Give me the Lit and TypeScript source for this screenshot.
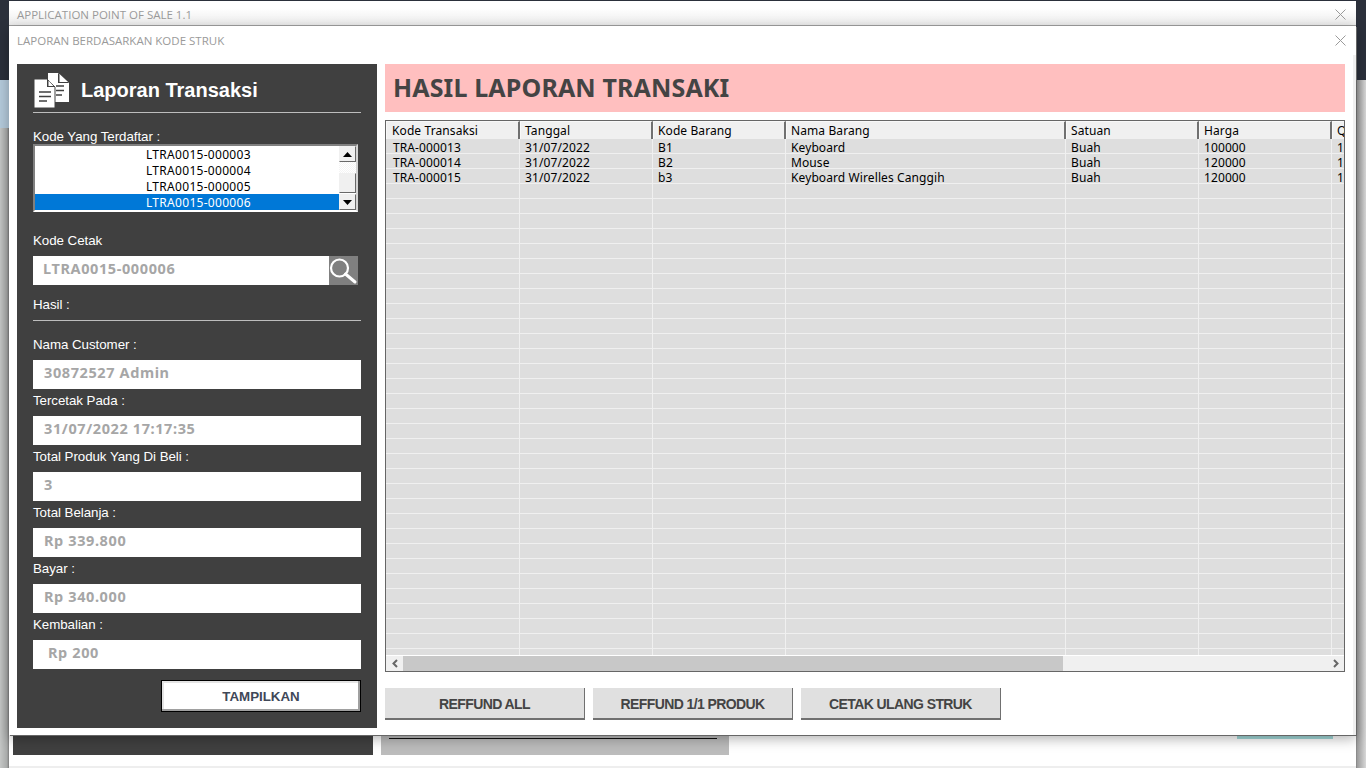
import { html, css, LitElement, svg } from 'lit';
import { customElement } from 'lit/decorators.js';

const listItems = ['LTRA0015-000003', 'LTRA0015-000004', 'LTRA0015-000005', 'LTRA0015-000006'];

const fields = [
  { label: 'Nama Customer :', value: '30872527 Admin' },
  { label: 'Tercetak Pada :', value: '31/07/2022 17:17:35' },
  { label: 'Total Produk Yang Di Beli :', value: '3' },
  { label: 'Total Belanja :', value: 'Rp 339.800' },
  { label: 'Bayar :', value: 'Rp 340.000' },
  { label: 'Kembalian :', value: 'Rp 200', wide: true },
];

const columns = ['Kode Transaksi', 'Tanggal', 'Kode Barang', 'Nama Barang', 'Satuan', 'Harga', 'Qty'];

const rows = [
  ['TRA-000013', '31/07/2022', 'B1', 'Keyboard', 'Buah', '100000', '1'],
  ['TRA-000014', '31/07/2022', 'B2', 'Mouse', 'Buah', '120000', '1'],
  ['TRA-000015', '31/07/2022', 'b3', 'Keyboard Wirelles Canggih', 'Buah', '120000', '1'],
];

const EMPTY_ROWS = 32;

const closeIcon = svg`<path d="M.5 .5L10.5 10.5M10.5 .5L.5 10.5" stroke="#9a9a9a" stroke-width="1" fill="none"/>`;

@customElement('app-root')
export class AppRoot extends LitElement {
  static styles = css`
    :host {
      display: block;
      width: 1366px;
      height: 768px;
      position: relative;
      overflow: hidden;
      font-family: "Liberation Sans", Arial, sans-serif;
      background: linear-gradient(90deg, #c4c6c5 0, #a8aaa9 7px, #7c7c7c 9px, #7c7c7c 1356px, #9a9a9a 1357px, #d8d8d8 1366px);
    }
    .desk-top {
      position: absolute;
      left: 0;
      top: 0;
      width: 1366px;
      height: 80px;
      background: #2b303b;
    }
    .desk-blue {
      position: absolute;
      left: 0;
      top: 80px;
      width: 9px;
      height: 48px;
      background: #b4cadb;
    }
    .main-window {
      position: absolute;
      left: 9px;
      top: 1px;
      width: 1347px;
      height: 767px;
      background: #fff;
      display: flex;
      flex-direction: column;
    }
    .titlebar {
      height: 25px;
      box-sizing: border-box;
      border-bottom: 1px solid #a0a0a0;
      background: linear-gradient(#fff 30%, #ececec);
      display: flex;
      align-items: center;
      justify-content: space-between;
      padding: 3px 10px 0 8px;
      font: 11.5px "Open Sans", sans-serif;
      color: #9a9a9a;
    }
    .close {
      width: 11px;
      height: 11px;
      display: block;
    }
    .behind {
      position: absolute;
      top: 734px;
      height: 20px;
    }
    .behind.dark {
      left: 4px;
      width: 360px;
      background: #404040;
    }
    .behind.grey {
      left: 372px;
      width: 348px;
      background: #bcbcbc;
    }
    .behind.grey::before {
      content: '';
      display: block;
      box-sizing: border-box;
      margin-left: 8px;
      width: 328px;
      height: 4px;
      border-bottom: 1px solid #111;
    }
    .behind.teal {
      left: 1228px;
      width: 96px;
      height: 4px;
      background: #a2d9d9;
    }
    .behind.line {
      height: 1px;
      background: #555;
    }
    .l1 { left: 732px; width: 56px; }
    .l2 { left: 812px; width: 120px; }
    .l3 { left: 940px; width: 168px; }
    .l4 { left: 1116px; width: 104px; }
    .footer-strip {
      position: absolute;
      left: 0;
      right: 0;
      bottom: 0;
      height: 2px;
      background: #eee;
    }

    .dialog {
      position: absolute;
      left: 9px;
      top: 26px;
      width: 1347px;
      height: 709px;
      background: #fff;
      box-shadow: 1px 1px 0 #666, 0 4px 12px rgba(0, 0, 0, 0.3);
      display: flex;
      flex-direction: column;
    }
    .dialog-head {
      height: 29px;
      flex: none;
      display: flex;
      align-items: center;
      justify-content: space-between;
      padding: 0 10px 0 8px;
      font: 11.5px "Open Sans", sans-serif;
      color: #9a9a9a;
    }
    .dialog-body {
      flex: 1;
      min-height: 0;
      display: flex;
      gap: 8px;
      padding: 9px 8px 7px;
      border-right: 3px solid #f0f0f0;
    }

    .panel {
      width: 328px;
      padding: 0 16px;
      background: #404040;
      color: #fff;
      display: flex;
      flex-direction: column;
      font-size: 13.33px;
      letter-spacing: -0.05px;
    }
    .panel-head {
      height: 49px;
      flex: none;
      box-sizing: border-box;
      border-bottom: 1px solid #bdbdbd;
      display: flex;
      align-items: center;
      gap: 12px;
      padding: 5px 0 0 1px;
      font-size: 20px;
      font-weight: bold;
      letter-spacing: 0;
    }
    .doc-icon {
      width: 35px;
      height: 35px;
      display: block;
    }
    .lbl {
      height: 16px;
      line-height: 18px;
      white-space: nowrap;
    }
    .first { margin-top: 15px; }
    .listbox {
      width: 325px;
      height: 68px;
      box-sizing: border-box;
      border: 2px solid #808080;
      border-right-color: #d4d4d4;
      border-bottom-color: #fff;
      background: #fff;
      display: flex;
      color: #000;
      letter-spacing: 0;
    }
    .list-items {
      width: 304px;
      font: 12px/18px "Noto Sans", sans-serif;
      letter-spacing: 0.3px;
    }
    .list-item {
      height: 16px;
      padding-left: 111px;
    }
    .list-item.sel {
      background: #0078d7;
      color: #fff;
    }
    .list-scroll {
      width: 17px;
      display: flex;
      flex-direction: column;
    }
    .sb-btn {
      box-sizing: border-box;
      border: 1px solid;
      border-color: #f0f0f0 #696969 #696969 #f0f0f0;
      background: #f0f0f0;
      display: flex;
      align-items: center;
      justify-content: center;
    }
    .sb-btn.arrow { height: 16px; }
    .sb-btn.thumb { height: 20px; }
    .sb-track {
      height: 11px;
      background: repeating-conic-gradient(#f4f4f4 0 25%, #fff 0 50%) 0 0 / 2px 2px;
    }
    .sb-gap { height: 1px; background: #fff; }
    .arrow-svg { width: 9px; height: 5px; display: block; }
    .search-row {
      display: flex;
      width: 325px;
      height: 29px;
      margin-top: 8px;
    }
    .box {
      background: #fff;
      color: #a6a6a6;
      font: bold 14.5px/24px "Noto Sans", sans-serif;
      letter-spacing: 0.6px;
      height: 29px;
      padding-left: 11px;
      box-sizing: border-box;
      white-space: nowrap;
    }
    .search-row .box {
      flex: 1;
      padding-left: 10px;
    }
    .search-btn {
      width: 29px;
      height: 29px;
      background: #808080;
    }
    .search-btn svg { width: 29px; height: 29px; display: block; }
    .cetak { margin-top: 20px; }
    .hasil { margin-top: 11px; }
    .rule {
      height: 1px;
      background: #bdbdbd;
      margin: 8px 0 15px;
      flex: none;
    }
    .field {
      margin-bottom: 3px;
    }
    .field .box { margin-top: 8px; }
    .field .box.wide { padding-left: 15px; }
    .show-btn {
      align-self: flex-end;
      width: 200px;
      height: 32px;
      margin-top: 8px;
      box-sizing: border-box;
      border: 1px solid #000;
      box-shadow: inset -2px -2px 0 #a0a0a0, inset 2px 2px 0 #e4e4e4;
      background: #fff;
      color: #404858;
      font: bold 13.33px "Liberation Sans", sans-serif;
      padding: 0;
    }

    .content {
      width: 960px;
      display: flex;
      flex-direction: column;
    }
    .banner {
      height: 48px;
      padding-left: 8px;
      background: #ffbfbf;
      color: #444;
      font: bold 25px/47px "Noto Sans", sans-serif;
      letter-spacing: 0.14px;
    }
    .table {
      height: 552px;
      margin-top: 8px;
      box-sizing: border-box;
      border: 1px solid #666;
      display: flex;
      flex-direction: column;
      font: 12px "Noto Sans", sans-serif;
      letter-spacing: 0.1px;
      color: #000;
      overflow: hidden;
    }
    .row {
      display: grid;
      grid-template-columns: 134px 133px 133px 280px 133px 133px 1fr;
    }
    .head-row { height: 18px; flex: none; }
    .head-cell {
      box-sizing: border-box;
      background: #f0f0f0;
      border: 1px solid;
      border-color: #f8f8f8 #707070 #707070 #f8f8f8;
      border-right-width: 2px;
      border-bottom-width: 2px;
      padding-left: 4px;
      line-height: 18px;
      white-space: nowrap;
    }
    .head-cell:first-child { padding-left: 5px; }
    .rows {
      flex: 1;
      min-height: 0;
      overflow: hidden;
      background: #dedede;
    }
    .data-row {
      height: 15px;
      box-sizing: border-box;
      border-bottom: 1px solid #f0f0f0;
    }
    .cell {
      border-right: 1px solid #f0f0f0;
      padding-left: 5px;
      line-height: 18px;
      height: 14px;
      white-space: nowrap;
    }
    .cell:first-child { padding-left: 7px; }
    .cell:last-child { border-right: none; }
    .hscroll {
      height: 16px;
      flex: none;
      box-sizing: border-box;
      border-top: 1px solid #fff;
      background: #f0f0f0;
      display: flex;
      align-items: center;
      position: relative;
    }
    .h-end {
      width: 17px;
      height: 15px;
      display: flex;
      align-items: center;
      justify-content: center;
      flex: none;
    }
    .h-thumb {
      width: 660px;
      height: 15px;
      background: #c8c8c8;
      flex: none;
    }
    .h-space { flex: 1; }
    .h-end svg { width: 6px; height: 9px; display: block; }
    .actions {
      display: flex;
      gap: 8px;
      margin-top: 16px;
    }
    .action {
      width: 200px;
      height: 32px;
      padding: 1px 0 0;
      box-sizing: border-box;
      border: none;
      border-right: 1px solid #707070;
      border-bottom: 2px solid #707070;
      background: #e0e0e0;
      color: #444;
      font: bold 14px "Liberation Sans", sans-serif;
      letter-spacing: -0.6px;
    }
  `;

  render() {
    return html`
      <div class="desk-top"></div>
      <div class="desk-blue"></div>
      <div class="main-window">
        <div class="titlebar">
          <span>APPLICATION POINT OF SALE 1.1</span>
          <svg class="close" viewBox="0 0 11 11">${closeIcon}</svg>
        </div>
        <div class="behind dark"></div>
        <div class="behind grey"></div>
        <div class="behind line l1"></div>
        <div class="behind line l2"></div>
        <div class="behind line l3"></div>
        <div class="behind line l4"></div>
        <div class="behind teal"></div>
        <div class="footer-strip"></div>
      </div>
      <div class="dialog">
        <div class="dialog-head">
          <span>LAPORAN BERDASARKAN KODE STRUK</span>
          <svg class="close" viewBox="0 0 11 11">${closeIcon}</svg>
        </div>
        <div class="dialog-body">
          ${this.renderPanel()}
          ${this.renderContent()}
        </div>
      </div>
    `;
  }

  renderPanel() {
    return html`
      <section class="panel">
        <div class="panel-head">
          <svg class="doc-icon" viewBox="0 0 35 35">
            <path d="M14 0H24L35 10V29H14Z" fill="#fff"/>
            <path d="M24 0L35 10H24Z" fill="#404040"/>
            <path d="M25.500 1L34 9H25.500Z" fill="#fff"/>
            <path d="M22 13H30M22 17.500H30M22 22H28" stroke="#404040" stroke-width="1.700"/>
            <path d="M0 6H13L21 14V35H0Z" fill="#fff" stroke="#404040" stroke-width="1"/>
            <path d="M13 6L21 14H13Z" fill="#404040"/>
            <path d="M14.500 7.500L19.500 13H14.500Z" fill="#fff"/>
            <path d="M5 19H17M5 23.500H17M5 28H13" stroke="#404040" stroke-width="1.700"/>
          </svg>
          <span>Laporan Transaksi</span>
        </div>
        <div class="lbl first">Kode Yang Terdaftar :</div>
        <div class="listbox">
          <div class="list-items">
            ${listItems.map((item, i) => html`
              <div class="list-item ${i === listItems.length - 1 ? 'sel' : ''}">${item}</div>
            `)}
          </div>
          <div class="list-scroll">
            <div class="sb-btn arrow">
              <svg class="arrow-svg" viewBox="0 0 9 5"><path d="M4.500 0L9 5H0Z" fill="#000"/></svg>
            </div>
            <div class="sb-track"></div>
            <div class="sb-btn thumb"></div>
            <div class="sb-gap"></div>
            <div class="sb-btn arrow">
              <svg class="arrow-svg" viewBox="0 0 9 5"><path d="M0 0H9L4.500 5Z" fill="#000"/></svg>
            </div>
          </div>
        </div>
        <div class="lbl cetak">Kode Cetak</div>
        <div class="search-row">
          <div class="box">LTRA0015-000006</div>
          <div class="search-btn">
            <svg viewBox="0 0 29 29">
              <circle cx="10.500" cy="12" r="8.500" fill="none" stroke="#fff" stroke-width="2.200"/>
              <path d="M16.500 18L26 26" stroke="#fff" stroke-width="3" stroke-linecap="round"/>
            </svg>
          </div>
        </div>
        <div class="lbl hasil">Hasil :</div>
        <div class="rule"></div>
        ${fields.map((f) => html`
          <div class="field">
            <div class="lbl">${f.label}</div>
            <div class="box ${f.wide ? 'wide' : ''}">${f.value}</div>
          </div>
        `)}
        <button class="show-btn">TAMPILKAN</button>
      </section>
    `;
  }

  renderContent() {
    return html`
      <section class="content">
        <div class="banner">HASIL LAPORAN TRANSAKI</div>
        <div class="table">
          <div class="row head-row">
            ${columns.map((c) => html`<div class="head-cell">${c}</div>`)}
          </div>
          <div class="rows">
            ${rows.map((r) => html`
              <div class="row data-row">${r.map((v) => html`<div class="cell">${v}</div>`)}</div>
            `)}
            ${Array.from({ length: EMPTY_ROWS }, () => html`
              <div class="row data-row">${columns.map(() => html`<div class="cell"></div>`)}</div>
            `)}
          </div>
          <div class="hscroll">
            <div class="h-end">
              <svg viewBox="0 0 6 9"><path d="M5 1L1.500 4.500L5 8" fill="none" stroke="#666" stroke-width="2"/></svg>
            </div>
            <div class="h-thumb"></div>
            <div class="h-space"></div>
            <div class="h-end">
              <svg viewBox="0 0 6 9"><path d="M1 1L4.500 4.500L1 8" fill="none" stroke="#666" stroke-width="2"/></svg>
            </div>
          </div>
        </div>
        <div class="actions">
          <button class="action">REFFUND ALL</button>
          <button class="action">REFFUND 1/1 PRODUK</button>
          <button class="action">CETAK ULANG STRUK</button>
        </div>
      </section>
    `;
  }
}
